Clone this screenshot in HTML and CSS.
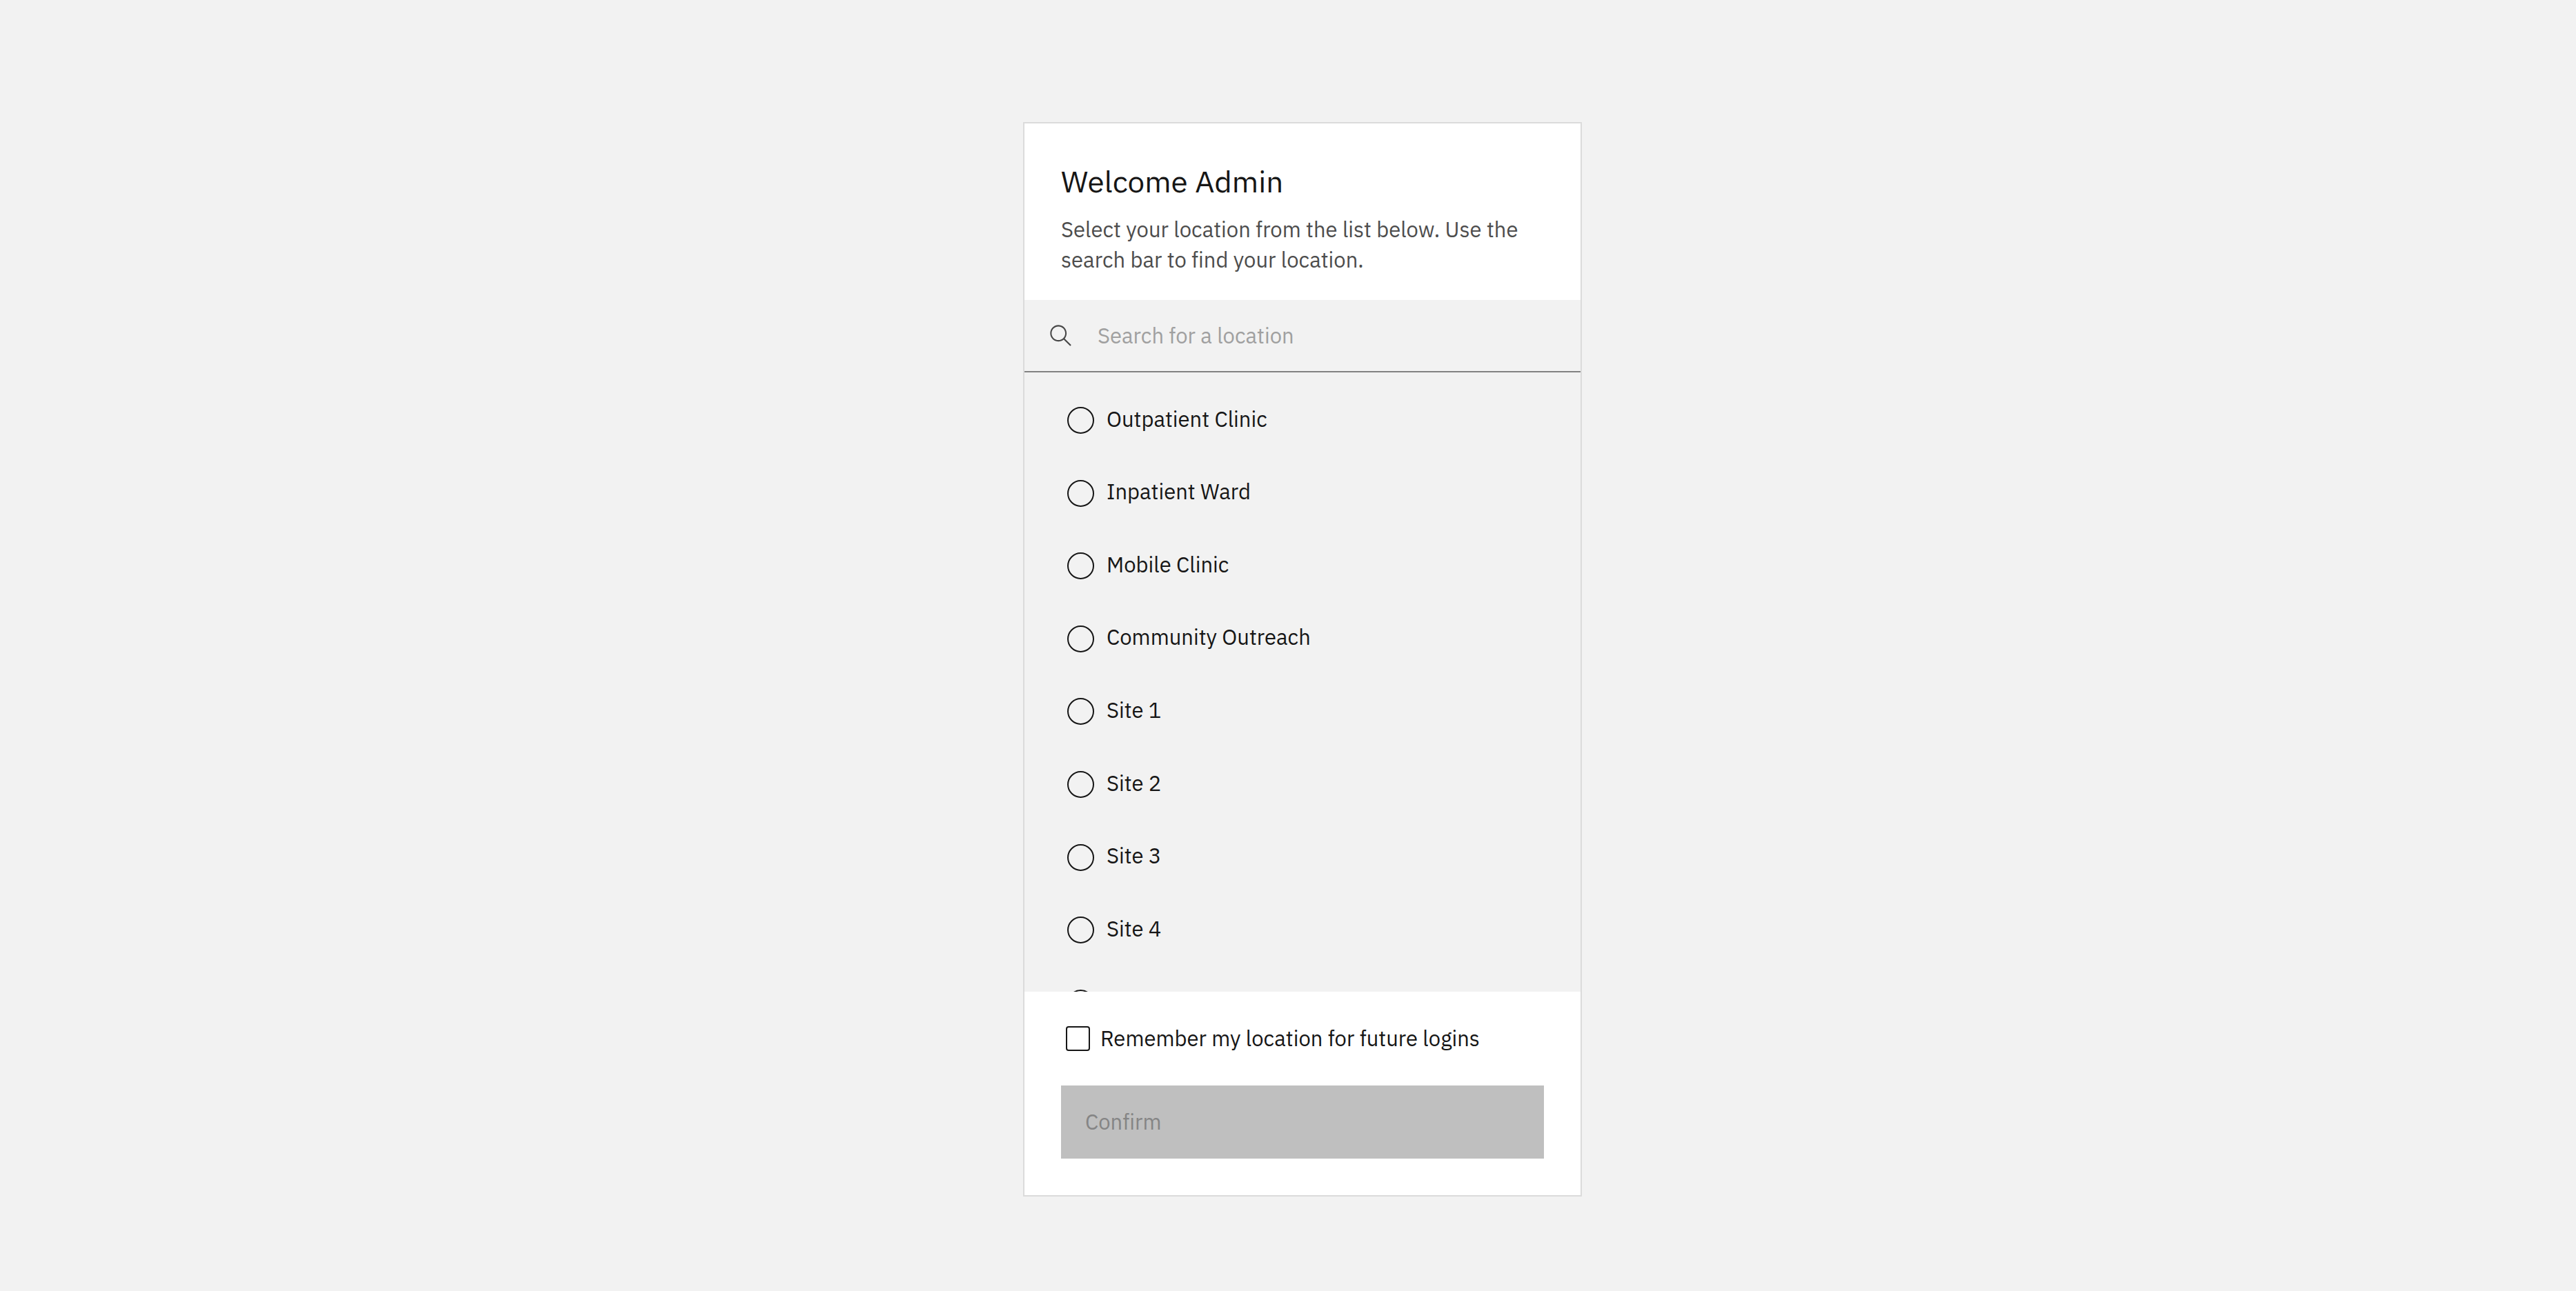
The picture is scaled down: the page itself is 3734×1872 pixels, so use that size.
FILE: index.html
```html
<!DOCTYPE html>
<html lang="en">
<head>
<meta charset="utf-8">
<meta name="viewport" content="width=device-width, initial-scale=1">
<title>Select location</title>
<link rel="stylesheet" href="styles.css">
</head>
<body>
<main class="page">
  <form class="card">
    <header class="intro">
      <h1 class="title">Welcome Admin</h1>
      <p class="lead">Select your location from the list below. Use the search bar to find your location.</p>
    </header>
    <div class="search">
      <svg class="search-icon" viewBox="0 0 16 16" aria-hidden="true"><path d="M15 14.3L10.7 10c1.9-2.3 1.6-5.8-.7-7.7S4.2.7 2.3 3 .7 8.8 3 10.7c2 1.7 5 1.7 7 0l4.3 4.3.7-.7zM2 6.5C2 4 4 2 6.5 2S11 4 11 6.5 9 11 6.5 11 2 9 2 6.5z"/></svg>
      <input class="search-input" type="text" aria-label="Search for a location" placeholder="Search for a location">
    </div>
    <div class="locations" role="radiogroup" aria-label="Locations">
      <div class="location-list">
        <label class="location"><input class="radio" type="radio" name="location"><span class="location-name">Outpatient Clinic</span></label>
        <label class="location"><input class="radio" type="radio" name="location"><span class="location-name">Inpatient Ward</span></label>
        <label class="location"><input class="radio" type="radio" name="location"><span class="location-name">Mobile Clinic</span></label>
        <label class="location"><input class="radio" type="radio" name="location"><span class="location-name">Community Outreach</span></label>
        <label class="location"><input class="radio" type="radio" name="location"><span class="location-name">Site 1</span></label>
        <label class="location"><input class="radio" type="radio" name="location"><span class="location-name">Site 2</span></label>
        <label class="location"><input class="radio" type="radio" name="location"><span class="location-name">Site 3</span></label>
        <label class="location"><input class="radio" type="radio" name="location"><span class="location-name">Site 4</span></label>
        <label class="location"><input class="radio" type="radio" name="location" aria-label="Site 5"></label>
      </div>
    </div>
    <footer class="actions">
      <label class="remember"><input class="checkbox" type="checkbox">Remember my location for future logins</label>
      <button class="confirm" type="submit" disabled>Confirm</button>
    </footer>
  </form>
</main>
</body>
</html>
```
FILE: styles.css
```css
* {
  box-sizing: border-box;
}

body {
  margin: 0;
  background: #f2f2f2;
  color: #161616;
  font-family: "IBM Plex Sans", "Noto Sans", sans-serif;
  font-size: 31px;
  font-variant-ligatures: none;
  line-height: 44px;
}

.page {
  display: grid;
  place-items: center;
  min-height: 100vh;
  padding: 40px 0 0 42px;
}

.card {
  width: 100%;
  max-width: 810px;
  background: #fff;
  border: 2px solid #dbdbdb;
}

.intro {
  padding: 52px 53px 36px;
}

.title {
  margin: 0 0 16px;
  font-size: 44px;
  font-weight: 400;
  line-height: 64px;
}

.lead {
  margin: 0;
  color: #4d4d4d;
}

.search {
  display: flex;
  align-items: center;
  gap: 36px;
  height: 105px;
  padding: 0 35px;
  background: #f2f2f2;
  border-bottom: 2px solid #828282;
}

.search-icon {
  flex: none;
  width: 35px;
  height: 35px;
  fill: #484848;
}

.search-input {
  flex: 1;
  min-width: 0;
  padding: 0;
  border: 0;
  outline: 0;
  background: transparent;
  color: inherit;
  font: inherit;
}

.search-input::placeholder {
  color: #a0a0a0;
  opacity: 1;
}

.locations {
  height: 898px;
  padding: 17px 62px 0;
  overflow: hidden;
  background: #f2f2f2;
}

.location-list {
  display: grid;
  grid-template-rows: repeat(9, 1fr);
  height: 950px;
}

.location {
  display: flex;
  align-items: center;
  gap: 18px;
}

.location-name {
  padding-bottom: 4px;
}

.radio,
.checkbox {
  flex: none;
  margin: 0;
  appearance: none;
  border: 2px solid #161616;
}

.radio {
  width: 39px;
  height: 39px;
  border-radius: 50%;
}

.radio:checked {
  background: radial-gradient(#161616 35%, transparent 38%);
}

.checkbox {
  width: 35px;
  height: 36px;
  border-radius: 4px;
}

.checkbox:checked {
  background: #161616;
}

.actions {
  display: flex;
  flex-direction: column;
  gap: 46px;
  padding: 46px 53px 53px;
}

.remember {
  display: flex;
  align-items: center;
  gap: 15px;
  padding-left: 7px;
}

.confirm {
  height: 106px;
  padding: 0 35px;
  border: 0;
  background: #bfbfbf;
  color: #858585;
  font: inherit;
  font-variant-ligatures: none;
  text-align: left;
}
```
